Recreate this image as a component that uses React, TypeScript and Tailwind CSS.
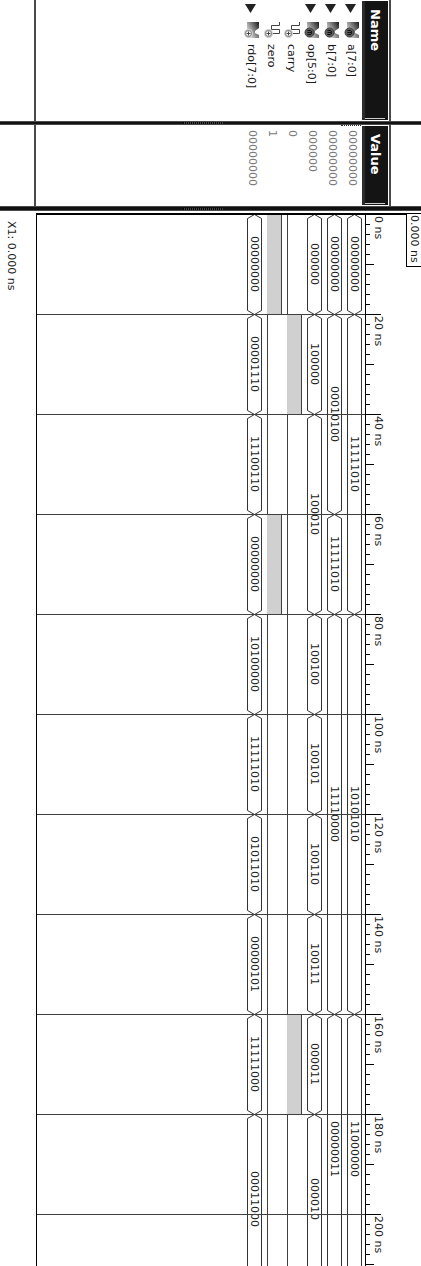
import React from "react";

const PX_PER_NS = 5;
const SPAN_NS = 214;
const RAIL_LOW = 2.5;
const RAIL_HIGH = 16.5;
const MID = 9.5;
const TAPER = 4;

type Segment = { start: number; end: number; value: string };
type Signal = {
  name: string;
  kind: "bus" | "bit";
  direction: "in" | "out";
  value: string;
  segments: Segment[];
};

function track(...items: [number, string][]): Segment[] {
  return items.map(([start, value], i) => ({
    start,
    end: i + 1 < items.length ? items[i + 1][0] : SPAN_NS,
    value,
  }));
}

const signals: Signal[] = [
  {
    name: "a[7:0]", kind: "bus", direction: "in", value: "00000000",
    segments: track([0, "00000000"], [20, "11111010"], [80, "10101010"], [160, "11000000"]),
  },
  {
    name: "b[7:0]", kind: "bus", direction: "in", value: "00000000",
    segments: track([0, "00000000"], [20, "00010100"], [60, "11111010"], [80, "11110000"], [160, "00000011"]),
  },
  {
    name: "op[5:0]", kind: "bus", direction: "in", value: "000000",
    segments: track(
      [0, "000000"], [20, "100000"], [40, "100010"], [80, "100100"], [100, "100101"],
      [120, "100110"], [140, "100111"], [160, "000011"], [180, "000010"],
    ),
  },
  {
    name: "carry", kind: "bit", direction: "out", value: "0",
    segments: track([0, "0"], [20, "1"], [40, "0"], [160, "1"], [180, "0"]),
  },
  {
    name: "zero", kind: "bit", direction: "out", value: "1",
    segments: track([0, "1"], [20, "0"], [60, "1"], [80, "0"]),
  },
  {
    name: "rdo[7:0]", kind: "bus", direction: "out", value: "00000000",
    segments: track(
      [0, "00000000"], [20, "00001110"], [40, "11100110"], [60, "00000000"], [80, "10100000"],
      [100, "11111010"], [120, "01011010"], [140, "00000101"], [160, "11111000"], [180, "00011000"],
    ),
  },
];

const gridTimes = Array.from({ length: 11 }, (_, i) => i * 20);
const tickTimes = Array.from({ length: 107 }, (_, i) => i * 2);

function SignalIcon({ kind, direction }: { kind: Signal["kind"]; direction: Signal["direction"] }) {
  const id = React.useId();
  return (
    <svg width="16" height="16" viewBox="0 0 16 16" aria-hidden="true">
      <defs>
        <linearGradient id={id} x1="0" x2="1" y1="0.8" y2="0.1">
          <stop offset="0" stopColor="#f2f2f2" />
          <stop offset="0.5" stopColor="#8a8a8a" />
          <stop offset="1" stopColor="#222222" />
        </linearGradient>
      </defs>
      {kind === "bus" ? (
        <path d="M3 0H15V6L11 9V11L15 13V16H3Z" fill={`url(#${id})`} />
      ) : (
        <path d="M15.5 0V3.5H7.5V7.5H15.5V11.5H7" fill="none" stroke="#444444" />
      )}
      {direction === "in" ? (
        <>
          <circle cx="5.5" cy="10.5" r="4.5" fill="#5a5a5a" stroke="#444444" />
          <path d="M3.5 8.5H6.5Q7.5 8.5 7.5 10.5T6.5 12.5H3.5M3.5 10.5H7" fill="none" stroke="#111111" />
        </>
      ) : (
        <>
          <circle cx="4.5" cy="11.5" r="4.5" fill="#cfcfcf" />
          <circle cx="4.5" cy="11.5" r="3" fill="#ffffff" stroke="#777777" />
          <path d="M4.5 9.5V13.5M2.5 11.5H6.5" stroke="#444444" />
        </>
      )}
    </svg>
  );
}

function Splitter({ thick = false }: { thick?: boolean }) {
  return (
    <div
      role="separator"
      className={`flex shrink-0 items-center border-y border-[#4a4a4a] bg-[#111111] pl-[183px] ${thick ? "h-[5px]" : "h-[4px]"}`}
    >
      <div className="h-[2px] w-[40px] bg-[repeating-linear-gradient(90deg,#000_0px,#000_1px,#444_1px,#444_2px)]" />
    </div>
  );
}

function PanelHeader({ title }: { title: string }) {
  return (
    <h2 className="flex w-[26px] flex-col justify-between border-l-3 border-[#2c2c2c] bg-[#141414] pt-[8px] pr-[3px] pb-[1px] text-[13px] leading-[20px] font-bold text-white">
      <span className="[writing-mode:vertical-rl]">{title}</span>
      <span className="h-px w-full bg-[#cccccc]" />
    </h2>
  );
}

function Panel({ title, className, children }: { title: string; className: string; children: React.ReactNode }) {
  return (
    <section className={`flex shrink-0 ${className}`}>
      <div className="w-[34px] shrink-0" />
      <div className="flex flex-1 flex-row-reverse border-l-2 border-[#4a4a4a]">
        <div className="w-[30px] shrink-0" />
        <div className="flex shrink-0 border-r-2 border-[#4a4a4a] pr-px">
          <div className="flex py-px">
            <PanelHeader title={title} />
          </div>
        </div>
        <div className="flex flex-row-reverse pr-px">{children}</div>
      </div>
    </section>
  );
}

function busPath(segments: Segment[]) {
  return segments
    .map(({ start, end }) => {
      const a = start * PX_PER_NS + 0.5;
      const b = end * PX_PER_NS + 0.5;
      return `M${MID} ${a}L${RAIL_LOW} ${a + TAPER}V${b - TAPER}L${MID} ${b}L${RAIL_HIGH} ${b - TAPER}V${a + TAPER}Z`;
    })
    .join("");
}

function Track({ signal }: { signal: Signal }) {
  const height = SPAN_NS * PX_PER_NS;
  return (
    <div className="grid w-[20px] shrink-0">
      <svg className="[grid-area:1/1]" width="20" height={height} aria-hidden="true">
        {signal.kind === "bus" ? (
          <path d={busPath(signal.segments)} fill="none" stroke="#333333" />
        ) : (
          signal.segments.map(({ start, end, value }) => {
            const top = start * PX_PER_NS;
            const size = (end - start) * PX_PER_NS;
            return value === "1" ? (
              <g key={start}>
                <rect x="2" y={top} width="14" height={size} fill="#d0d0d0" />
                <rect x="16" y={top} width="1" height={size} fill="#404040" />
              </g>
            ) : (
              <rect key={start} x="2" y={top} width="1" height={size} fill="#404040" />
            );
          })
        )}
      </svg>
      {signal.kind === "bus" && (
        <div className="flex flex-col [grid-area:1/1]">
          {signal.segments.map(({ start, end, value }) => (
            <div
              key={start}
              className="flex w-[18px] items-center justify-center"
              style={{ height: (end - start) * PX_PER_NS }}
            >
              <span className="leading-[18px] [writing-mode:vertical-rl]">{value}</span>
            </div>
          ))}
        </div>
      )}
    </div>
  );
}

function TimeAxis() {
  return (
    <div className="grid w-[41px] shrink-0">
      <svg className="[grid-area:1/1]" width="16" height={SPAN_NS * PX_PER_NS} aria-hidden="true">
        <rect width="1" height="100%" />
        {tickTimes.map((t) => (
          <rect key={t} y={t * PX_PER_NS} width={t % 20 === 0 ? 16 : t % 10 === 0 ? 9 : 5} height="1" />
        ))}
      </svg>
      <div className="flex flex-col pl-[3px] [grid-area:1/1]">
        {gridTimes.map((t) => (
          <div key={t} className="h-[100px] w-[20px] pt-[2px]">
            <span className="block leading-[20px] whitespace-nowrap [writing-mode:vertical-rl]">{t} ns</span>
          </div>
        ))}
      </div>
    </div>
  );
}

export default function App() {
  return (
    <main className="flex h-screen flex-col overflow-hidden bg-white font-['DejaVu_Sans',sans-serif] text-[11px] text-[#1a1a1a]">
      <Panel title="Name" className="h-[121px]">
        {signals.map((s) => (
          <div key={s.name} className="flex w-[20px] flex-col pt-[4px]">
            {s.kind === "bus" ? (
              <button type="button" aria-label={`Expand ${s.name}`} className="block h-[9px] pl-[4px]">
                <svg width="11" height="9" viewBox="0 0 11 9" aria-hidden="true">
                  <path d="M0 0H11L5.5 9Z" fill="#222222" />
                </svg>
              </button>
            ) : (
              <div className="h-[9px]" />
            )}
            <div className="mt-[9px] h-[16px] pl-[3px]">
              <SignalIcon kind={s.kind} direction={s.direction} />
            </div>
            <span className="mt-[6px] leading-[20px] [writing-mode:vertical-rl]">{s.name}</span>
          </div>
        ))}
      </Panel>
      <Splitter />
      <Panel title="Value" className="h-[81px]">
        {signals.map((s, i) => (
          <div
            key={s.name}
            className={`flex w-[20px] flex-col items-center border-t border-dotted pt-[4px] pl-[2px] text-[#777777] ${i === 0 ? "border-[#333333]" : "border-transparent"}`}
          >
            <span className="leading-[18px] [writing-mode:vertical-rl]">{s.value}</span>
          </div>
        ))}
      </Panel>
      <Splitter thick />
      <section className="flex min-h-0 flex-1 pt-[2px]">
        <div className="w-[36px] shrink-0 pt-[8px]">
          <span className="block leading-[22px] [writing-mode:vertical-rl]">X1: 0.000 ns</span>
        </div>
        <div className="grid min-w-0 flex-1 content-start overflow-auto border-t border-l border-black [scrollbar-width:none]">
          <div className="flex justify-end [grid-area:1/1]">
            <div className="flex flex-row-reverse">
              {signals.map((s) => (
                <Track key={s.name} signal={s} />
              ))}
            </div>
            <TimeAxis />
          </div>
          <div className="pointer-events-none flex flex-col [grid-area:1/1]">
            {gridTimes.map((t) => (
              <div key={t} className="group h-[100px]">
                <div className="mr-[41px] border-t border-[#404040] group-first:mr-0 group-first:border-black" />
              </div>
            ))}
          </div>
        </div>
        <div className="w-[15px] shrink-0">
          <div className="h-[54px] border-y border-l border-black pt-px">
            <span className="block leading-[14px] whitespace-nowrap [writing-mode:vertical-rl]">0.000 ns</span>
          </div>
        </div>
      </section>
    </main>
  );
}
